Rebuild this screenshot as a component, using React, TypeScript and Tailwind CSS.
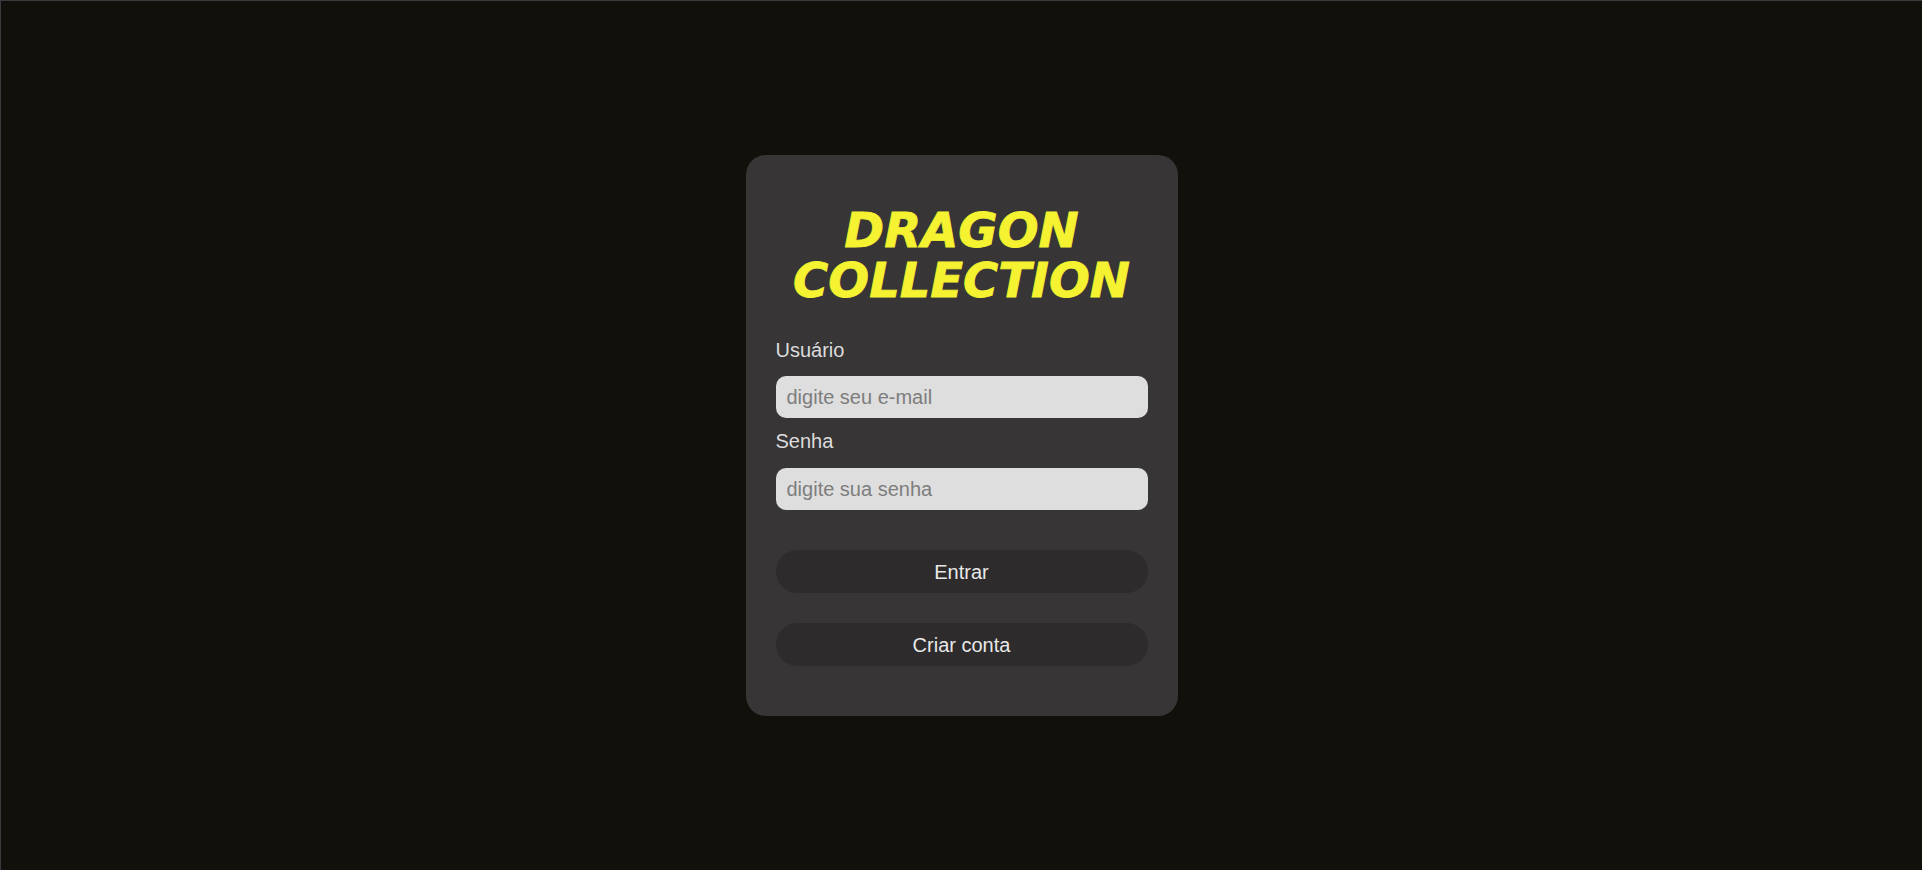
import React, { useState } from 'react';

export default function App() {
  const [email, setEmail] = useState('');
  const [senha, setSenha] = useState('');

  return (
    <div className="h-screen w-full bg-[#11100b] border-t border-l border-[#3b3b3f] flex items-center justify-center font-['Liberation_Sans',Arial,sans-serif]">
      <form
        onSubmit={(e) => e.preventDefault()}
        className="w-[432px] bg-[#373536] rounded-[20px] px-[30px] pt-[50px] pb-[50px] flex flex-col"
      >
        <h1 className="text-center text-[#f5f232] text-[48px] font-bold italic font-['DejaVu_Sans',sans-serif] [-webkit-text-stroke:0.8px_#f5f232] mb-[34px]">
          <span className="block leading-[50px] h-[50px] overflow-visible">DRAGON</span>
          <span className="block leading-[50px] h-[50px] overflow-visible">COLLECTION</span>
        </h1>

        <label className="text-[20px] leading-[23px] text-[#dcdcdc] mb-[14px]">Usuário</label>
        <input
          type="email"
          value={email}
          onChange={(e) => setEmail(e.target.value)}
          placeholder="digite seu e-mail"
          className="h-[42px] rounded-[10px] bg-[#dedede] px-[11px] text-[20px] text-[#222] placeholder:text-[#7d7d7d] outline-none mb-[12px]"
        />

        <label className="text-[20px] leading-[23px] text-[#dcdcdc] mb-[15px]">Senha</label>
        <input
          type="password"
          value={senha}
          onChange={(e) => setSenha(e.target.value)}
          placeholder="digite sua senha"
          className="h-[42px] rounded-[10px] bg-[#dedede] px-[11px] text-[20px] text-[#222] placeholder:text-[#7d7d7d] outline-none"
        />

        <button
          type="submit"
          className="mt-[40px] h-[43px] rounded-full bg-[#2d2b2c] text-[20px] text-[#e8e8e8]"
        >
          Entrar
        </button>
        <button
          type="button"
          className="mt-[30px] h-[43px] rounded-full bg-[#2d2b2c] text-[20px] text-[#e8e8e8]"
        >
          Criar conta
        </button>
      </form>
    </div>
  );
}
